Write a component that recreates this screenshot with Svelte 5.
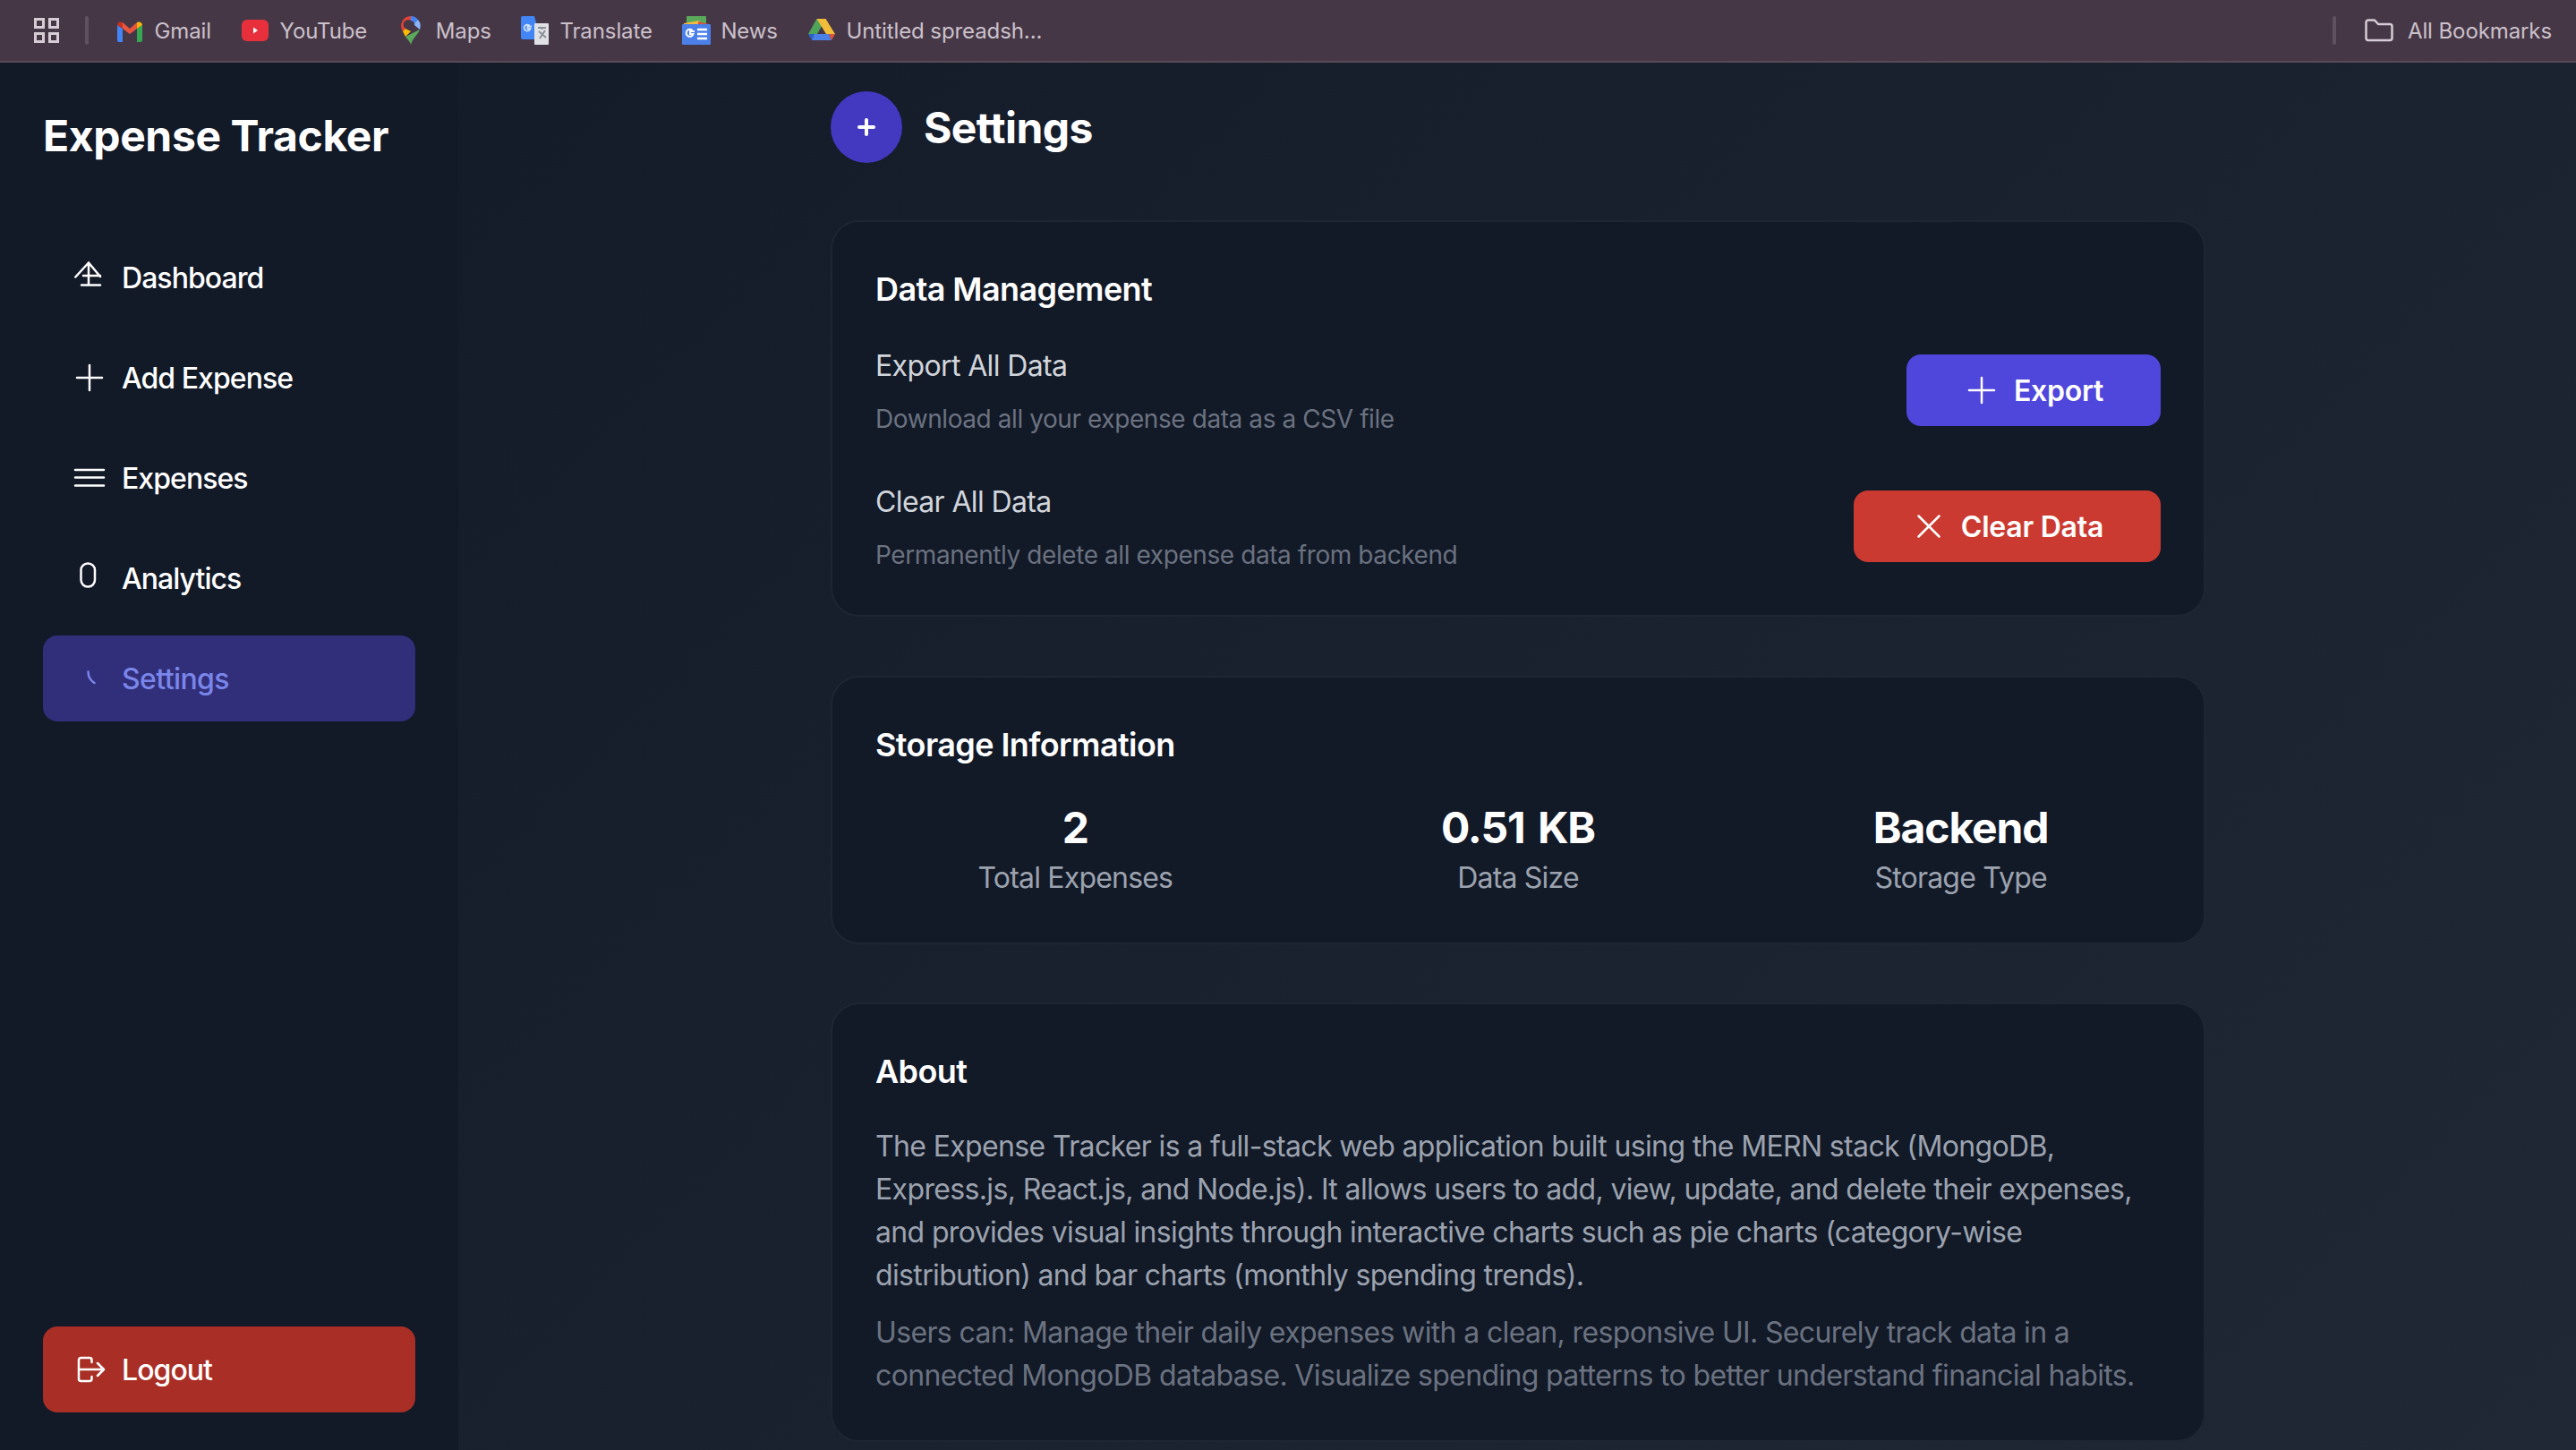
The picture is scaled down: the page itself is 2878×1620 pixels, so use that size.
<script>
  const bookmarks = [
    { key: 'gmail', label: 'Gmail' },
    { key: 'youtube', label: 'YouTube' },
    { key: 'maps', label: 'Maps' },
    { key: 'translate', label: 'Translate' },
    { key: 'news', label: 'News' },
    { key: 'drive', label: 'Untitled spreadsh...' }
  ];
  const nav = [
    { key: 'dashboard', label: 'Dashboard' },
    { key: 'add', label: 'Add Expense' },
    { key: 'expenses', label: 'Expenses' },
    { key: 'analytics', label: 'Analytics' },
    { key: 'settings', label: 'Settings', active: true }
  ];
  const stats = [
    { value: '2', label: 'Total Expenses' },
    { value: '0.51 KB', label: 'Data Size' },
    { value: 'Backend', label: 'Storage Type' }
  ];
</script>

<div class="page">
  <header class="bar">
    <svg class="grid-icon" viewBox="0 0 28 28" width="28" height="28" fill="none" stroke="#d5ccd5" stroke-width="3">
      <rect x="1.5" y="1.5" width="9" height="9" /><rect x="17.5" y="1.5" width="9" height="9" />
      <rect x="1.5" y="17.5" width="9" height="9" /><rect x="17.5" y="17.5" width="9" height="9" />
    </svg>
    <span class="sep"></span>
    <div class="marks">
      {#each bookmarks as b}
        <div class="mark">
          <svg viewBox="0 0 32 32" width="32" height="32">
            {#if b.key === 'gmail'}
              <path d="M2 10v17a2 2 0 0 0 2 2h4V14z" fill="#4285f4" /><path d="M24 14v15h4a2 2 0 0 0 2-2V10z" fill="#34a853" />
              <path d="M8 14V7l8 7 8-7v7l-8 6z" fill="#e8553f" />
              <path d="M2 10a4 4 0 0 1 6-3v7z" fill="#c5321f" /><path d="M24 7a4 4 0 0 1 6 3l-6 4z" fill="#f4b60a" />
            {:else if b.key === 'youtube'}
              <rect x="1" y="4" width="30" height="24" rx="6" fill="#e8303c" />
              <path d="M14 12.500l5 3.500-5 3.500z" fill="#fff" />
            {:else if b.key === 'maps'}
              <path d="M16 0a11 11 0 0 0-9 17l3-3a5 5 0 0 1 6-9z" fill="#ea4335" />
              <path d="M16 0a11 11 0 0 1 8 4l-4 4a5 5 0 0 0-4-3z" fill="#4285f4" />
              <path d="M24 4a11 11 0 0 1 2 11l-6-5a5 5 0 0 0 0-2z" fill="#8ab4f8" />
              <path d="M7 17l3-3 6 3-6 6z" fill="#fbbc04" />
              <path d="M10 23l16-8c-2 6-8 9-10 17-1-4-4-6-6-9z" fill="#5aa85a" />
              <circle cx="16" cy="11" r="4" fill="#463747" />
            {:else if b.key === 'translate'}
              <path d="M0 2a2 2 0 0 1 2-2h13l7 26H2a2 2 0 0 1-2-2z" fill="#4285f4" />
              <rect x="15" y="8" width="16" height="24" rx="1" fill="#dfe1e5" />
              <path d="M19 13h9M23.500 12v3M20 17l8 7M27 16l-6 9" stroke="#8a8f98" stroke-width="2" fill="none" />
              <path d="M12 11.500h-4.500v2.500h3a3.500 3.500 0 1 1-1-3.500" stroke="#cfe0fc" stroke-width="1.800" fill="none" />
            {:else if b.key === 'news'}
              <rect x="5" y="0" width="22" height="8" rx="1" fill="#5aa85a" />
              <path d="M2 8l17-3 2 4H2z" fill="#f4b942" /><path d="M18 6l12 3v3H18z" fill="#d9533f" />
              <rect x="0" y="9" width="32" height="23" rx="1" fill="#4a80e8" />
              <path d="M14 17h-5v3h3.500a4 4 0 1 1-1-4" stroke="#fff" stroke-width="2" fill="none" />
              <path d="M17 15h11M17 20h11M17 25h11" stroke="#fff" stroke-width="2.500" />
            {:else}
              <path d="M10.500 3h10L11 20H1z" fill="#4fa45a" />
              <path d="M10.500 3h10L31 20H21z" fill="#f2bd3a" />
              <path d="M1 20h10l-2 7H5z" fill="#2b63c4" />
              <path d="M8 20h16l3 7H5z" fill="#4a80e8" />
              <path d="M24 20h7l-4 7z" fill="#d9533f" />
            {/if}
          </svg>
          <span>{b.label}</span>
        </div>
      {/each}
    </div>
    <span class="sep right"></span>
    <div class="mark all">
      <svg viewBox="0 0 32 26" width="32" height="26" fill="none" stroke="#d5ccd5" stroke-width="2.500" stroke-linejoin="round">
        <path d="M1.500 4a2.500 2.500 0 0 1 2.500-2.500h7l4 4.500h13a2.500 2.500 0 0 1 2.500 2.500v13a2.500 2.500 0 0 1-2.500 2.500H4a2.500 2.500 0 0 1-2.500-2.500z" />
      </svg>
      <span>All Bookmarks</span>
    </div>
  </header>

  <div class="shell">
    <aside class="side">
      <h1>Expense Tracker</h1>
      <nav>
        {#each nav as item}
          <div class="item" class:active={item.active}>
            <svg viewBox="0 0 40 40" width="40" height="40" fill="none" stroke="currentColor" stroke-width="2.500" stroke-linecap="round" stroke-linejoin="round">
              {#if item.key === 'dashboard'}
                <path d="M4.300 19.500L19 3.500l13 15.500M13 18h19M19 3.500v25M11 28.500h21" />
              {:else if item.key === 'add'}
                <path d="M20 6v28M6 20h28" />
              {:else if item.key === 'expenses'}
                <path d="M4 11h32M4 19.500h32M4 28.500h32" />
              {:else if item.key === 'analytics'}
                <rect x="10.500" y="3.500" width="15.500" height="26" rx="7.500" />
              {:else}
                <path d="M18.500 12.500c0 6 2 9.500 7 12.500" />
              {/if}
            </svg>
            <span>{item.label}</span>
          </div>
        {/each}
      </nav>
      <div class="item logout">
        <svg viewBox="0 0 40 40" width="40" height="40" fill="none" stroke="currentColor" stroke-width="2.500" stroke-linecap="round" stroke-linejoin="round">
          <path d="M22.500 12V9.500a2.500 2.500 0 0 0-2.500-2.500H10.500a2.500 2.500 0 0 0-2.500 2.500v21a2.500 2.500 0 0 0 2.500 2.500H20a2.500 2.500 0 0 0 2.500-2.500V28M9 20h27M29 13l7 7-7 7" />
        </svg>
        <span>Logout</span>
      </div>
    </aside>

    <main>
      <div class="content">
        <div class="head">
          <div class="circle">
            <svg viewBox="0 0 20 20" width="20" height="20" fill="none" stroke="#fff" stroke-width="4" stroke-linecap="round"><path d="M10 2v16M2 10h16" /></svg>
          </div>
          <h2>Settings</h2>
        </div>

        <section class="card first">
          <h3 class="tight">Data Management</h3>
          <div class="row">
            <div>
              <div class="r-title">Export All Data</div>
              <div class="r-desc">Download all your expense data as a CSV file</div>
            </div>
            <div class="btn blue">
              <svg viewBox="0 0 40 40" width="40" height="40" fill="none" stroke="#fff" stroke-width="2.500" stroke-linecap="round"><path d="M20 6v28M6 20h28" /></svg>
              <span>Export</span>
            </div>
          </div>
          <div class="row">
            <div>
              <div class="r-title">Clear All Data</div>
              <div class="r-desc">Permanently delete all expense data from backend</div>
            </div>
            <div class="btn red">
              <svg viewBox="0 0 40 40" width="40" height="40" fill="none" stroke="#fff" stroke-width="2.500" stroke-linecap="round"><path d="M8.500 8.500l23 23M31.500 8.500l-23 23" /></svg>
              <span>Clear Data</span>
            </div>
          </div>
        </section>

        <section class="card second">
          <h3>Storage Information</h3>
          <div class="stats">
            {#each stats as s}
              <div class="stat">
                <div class="value">{s.value}</div>
                <div class="label">{s.label}</div>
              </div>
            {/each}
          </div>
        </section>

        <section class="card">
          <h3>About</h3>
          <p class="about">The Expense Tracker is a full-stack web application built using the MERN stack (MongoDB, Express.js, React.js, and Node.js). It allows users to add, view, update, and delete their expenses, and provides visual insights through interactive charts such as pie charts (category-wise distribution) and bar charts (monthly spending trends).</p>
          <p class="about muted">Users can: Manage their daily expenses with a clean, responsive UI. Securely track data in a connected MongoDB database. Visualize spending patterns to better understand financial habits.</p>
        </section>
      </div>
    </main>
  </div>
</div>

<style>
  :global(body) { margin: 0; background: #121927; }
  .page {
    width: 2878px; height: 1620px; overflow: hidden;
    display: flex; flex-direction: column;
    font-family: Inter, "Liberation Sans", sans-serif; color: #fff;
  }
  h1, h2, h3, p { margin: 0; }
  svg { flex: none; display: block; }

  .bar {
    flex: none; box-sizing: border-box; height: 70px;
    background: #463747; border-bottom: 2px solid #574c55;
    display: flex; align-items: center; padding: 0 27px 0 38px;
    font-size: 24px; color: #cbc1ca; letter-spacing: -0.1px;
  }
  .sep { width: 4px; height: 32px; border-radius: 2px; background: #5f5160; margin: 0 30px 0 29px; flex: none; }
  .sep.right { margin: 0 32px 0 0; }
  .marks { display: flex; align-items: center; gap: 33px; flex: 1; }
  .mark { display: flex; align-items: center; gap: 11.500px; white-space: nowrap; }
  .mark.all { gap: 16px; }

  .shell { flex: 1; display: flex; min-height: 0; background: linear-gradient(135deg, #121927, #202735); }
  .side {
    flex: none; box-sizing: border-box; width: 512px; background: #121927;
    padding: 48px 48px 42px; display: flex; flex-direction: column;
  }
  .side h1 { font-size: 48px; line-height: 68px; font-weight: 700; letter-spacing: -0.37px; }
  nav { margin-top: 76px; flex: 1; display: flex; flex-direction: column; gap: 16px; }
  .item {
    height: 96px; width: 416px; box-sizing: border-box; padding-left: 32px;
    border-radius: 16px; display: flex; align-items: center; gap: 16px;
    font-size: 32px; font-weight: 500; color: #fff; flex: none; letter-spacing: -0.95px;
  }
  .item.active { background: #312e7a; color: #7a86ea; letter-spacing: -0.6px; }
  .logout { background: #a92f26; }

  main { flex: 1; min-width: 0; padding: 32px 0 0 2px; }
  .content { width: 1536px; margin: 0 auto; display: flex; flex-direction: column; }
  .head { display: flex; align-items: center; gap: 24px; margin-bottom: 64px; }
  .circle { width: 80px; height: 80px; border-radius: 50%; background: #4338c0; display: flex; align-items: center; justify-content: center; }
  h2 { font-size: 48px; font-weight: 700; line-height: 64px; letter-spacing: -0.6px; padding-top: 1px; }

  .card {
    box-sizing: border-box; background: #121927; border: 2px solid #1f2633;
    border-radius: 32px; padding: 48px; margin-bottom: 66px;
  }
  .card.first { padding-bottom: 47px; }
  .card.second { margin-bottom: 65px; }
  h3 { font-size: 36px; font-weight: 600; line-height: 54px; letter-spacing: -0.6px; }
  .tight { margin-bottom: 34px; }
  .row { display: flex; align-items: center; justify-content: space-between; height: 104px; }
  .row + .row { margin-top: 48px; }
  .r-title { font-size: 32px; line-height: 48px; color: #d1d5db; margin-bottom: 15px; letter-spacing: -0.62px; }
  .r-desc { font-size: 28px; line-height: 40px; color: #6b7280; letter-spacing: -0.42px; }
  .btn {
    height: 80px; box-sizing: border-box; padding: 0 64px; border-radius: 16px;
    display: flex; align-items: center; gap: 16px; font-size: 32px; font-weight: 600; letter-spacing: -0.25px;
  }
  .blue { background: #4f46dc; }
  .red { background: #cb3a31; }

  .stats { display: grid; grid-template-columns: repeat(3, 1fr); gap: 48px; margin-top: 34px; }
  .stat { text-align: center; }
  .value { font-size: 48px; font-weight: 700; line-height: 64px; letter-spacing: -1.1px; word-spacing: 4px; }
  .label { font-size: 32px; line-height: 48px; color: #9ca3af; letter-spacing: -0.8px; }

  .about { font-size: 32px; line-height: 48px; color: #9ca3af; margin-top: 33px; letter-spacing: -0.64px; }
  .about.muted { color: #6b7280; margin-top: 16px; }
</style>
